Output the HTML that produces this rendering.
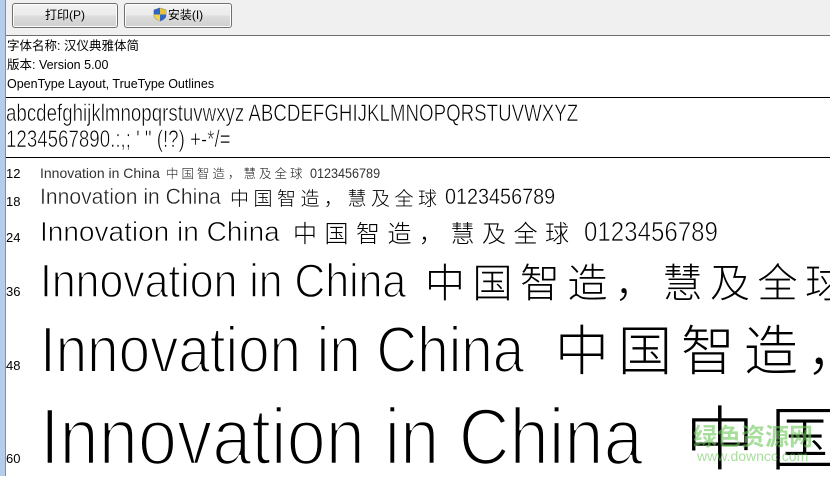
<!DOCTYPE html>
<html><head><meta charset="utf-8"><style>
body{margin:0;width:830px;height:476px;overflow:hidden;background:#fff;position:relative;font-family:"Liberation Sans","Noto Sans CJK SC",sans-serif;color:#000}
.a{position:absolute;white-space:nowrap;line-height:1;transform-origin:0 0;-webkit-text-stroke-color:#fff}
.c{position:absolute;white-space:nowrap;line-height:1;font-family:"Noto Sans CJK SC",sans-serif;font-weight:300}
#strip{position:absolute;left:0;top:0;width:5px;height:476px;background:#b5cde8}
#sline{position:absolute;left:5px;top:0;width:1px;height:476px;background:#8a8f96}
#tb{position:absolute;left:6px;top:0;right:0;height:35px;background:#f0f0f0;border-bottom:1px solid #6d6d6d}
.btn{position:absolute;top:3px;height:23px;border:1px solid #707070;border-radius:3px;background:linear-gradient(#f2f2f2 0,#ebebeb 50%,#dddddd 51%,#cfcfcf 100%);font-size:12px;line-height:23px;text-align:center;box-shadow:inset 0 0 0 1px #fcfcfc}
.hl{position:absolute;left:6px;right:0;height:1px;background:#000}
.inf{position:absolute;left:7px;font-size:12.5px;line-height:15px;white-space:nowrap}
.lb{position:absolute;left:6px;font-size:13px;line-height:13px}
</style></head><body>
<div id="strip"></div><div id="sline"></div>
<div id="tb">
<div class="btn" style="left:6px;width:104px">打印(P)</div>
<div class="btn" style="left:118px;width:106px"><svg width="14" height="15" viewBox="0 0 14 15" style="vertical-align:-3px;margin-right:1px"><path d="M7 1 L13 3 V8 C13 11 10 13 7 14 C4 13 1 11 1 8 V3 Z" fill="#2f66c4" stroke="#4a5a7a" stroke-width=".6"/><path d="M7 1 V7.5 H1 V3 Z" fill="#2f66c4"/><path d="M7 1 L13 3 V7.5 H7 Z" fill="#e8c23a"/><path d="M1 7.5 H7 V14 C4 13 1 11 1 8Z" fill="#f2d34a"/><path d="M7 7.5 H13 V8 C13 11 10 13 7 14Z" fill="#2f66c4"/></svg>安装(I)</div>
</div>
<div class="inf" style="top:39px">字体名称: 汉仪典雅体简</div>
<div class="inf" style="top:58px">版本: Version 5.00</div>
<div class="inf" style="top:77px">OpenType Layout, TrueType Outlines</div>
<div class="hl" style="top:97px"></div>
<div class="a" style="left:6px;top:102px;font-size:24px;transform:scaleX(.78);-webkit-text-stroke-width:.6px">abcdefghijklmnopqrstuvwxyz ABCDEFGHIJKLMNOPQRSTUVWXYZ</div>
<div class="a" style="left:6px;top:128px;font-size:24px;transform:scaleX(.78);-webkit-text-stroke-width:.6px">1234567890.:,; ' " (!?) +-*/=</div>
<div class="hl" style="top:157px"></div>

<div class="lb" style="top:167px">12</div>
<div class="a" style="left:40px;top:166px;font-size:14px;color:#333">Innovation in China</div>
<div class="c" style="left:166px;top:167px;font-size:12.5px;letter-spacing:3px;color:#222">中国智造，慧及全球</div>
<div class="a" style="left:310px;top:166px;font-size:14px;transform:scaleX(.9);color:#333">0123456789</div>

<div class="lb" style="top:195px">18</div>
<div class="a" style="left:40px;top:186px;font-size:22px;transform:scaleX(.96);color:#222;-webkit-text-stroke-width:.4px">Innovation in China</div>
<div class="c" style="left:230px;top:188px;font-size:19px;letter-spacing:4.5px">中国智造，慧及全球</div>
<div class="a" style="left:445px;top:186px;font-size:22px;transform:scaleX(.9);-webkit-text-stroke-width:.4px">0123456789</div>

<div class="lb" style="top:231px">24</div>
<div class="a" style="left:40px;top:218px;font-size:28px;-webkit-text-stroke-width:.7px">Innovation in China</div>
<div class="c" style="left:293px;top:220px;font-size:24px;letter-spacing:7.5px">中国智造，慧及全球</div>
<div class="a" style="left:584px;top:218px;font-size:28px;transform:scaleX(.86);-webkit-text-stroke-width:.7px">0123456789</div>

<div class="lb" style="top:285px">36</div>
<div class="a" style="left:40px;top:257px;font-size:47px;transform:scaleX(.91);-webkit-text-stroke-width:1.4px">Innovation in China</div>
<div class="c" style="left:425px;top:260px;font-size:40px;letter-spacing:7.5px">中国智造，慧及全球</div>

<div class="lb" style="top:359px">48</div>
<div class="a" style="left:40px;top:317px;font-size:65px;transform:scaleX(.87);-webkit-text-stroke-width:2px">Innovation in China</div>
<div class="c" style="left:555px;top:320px;font-size:54px;letter-spacing:9px">中国智造，</div>

<div class="lb" style="top:452px">60</div>
<div class="a" style="left:40px;top:397px;font-size:80px;transform:scaleX(.88);-webkit-text-stroke-width:2.6px">Innovation in China</div>
<div class="c" style="left:685px;top:400px;font-size:70px;letter-spacing:15px">中国</div>

<div style="position:absolute;left:693px;top:422px;font-size:24px;font-weight:bold;color:rgba(110,200,90,.6);font-family:'Noto Sans CJK SC',sans-serif;line-height:26px">绿色资源网</div>
<div style="position:absolute;left:697px;top:449px;font-size:14px;color:rgba(110,200,90,.6);line-height:14px">www.downcc.com</div>
</body></html>
